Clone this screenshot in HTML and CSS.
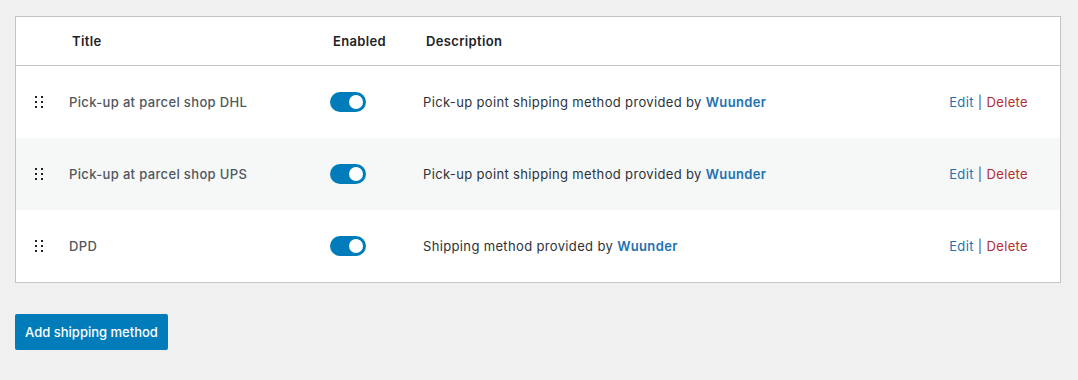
FILE: index.html
```html
<!DOCTYPE html>
<html>
<head>
<meta charset="utf-8">
<link rel="stylesheet" href="styles.css">
</head>
<body>
<div class="page">
  <div class="methods">
    <div class="row head">
      <div class="cell"></div>
      <div class="cell h">Title</div>
      <div class="cell h">Enabled</div>
      <div class="cell h">Description</div>
      <div class="cell"></div>
    </div>
    <div class="row">
      <div class="cell"><span class="drag"><i></i><i></i><i></i><i></i><i></i><i></i></span></div>
      <div class="cell title">Pick-up at parcel shop DHL</div>
      <div class="cell"><span class="toggle"><span class="knob"></span></span></div>
      <div class="cell desc">Pick-up point shipping method provided by <a>Wuunder</a></div>
      <div class="cell actions"><a class="edit">Edit</a> <span class="sep">|</span> <a class="del">Delete</a></div>
    </div>
    <div class="row alt">
      <div class="cell"><span class="drag"><i></i><i></i><i></i><i></i><i></i><i></i></span></div>
      <div class="cell title">Pick-up at parcel shop UPS</div>
      <div class="cell"><span class="toggle"><span class="knob"></span></span></div>
      <div class="cell desc">Pick-up point shipping method provided by <a>Wuunder</a></div>
      <div class="cell actions"><a class="edit">Edit</a> <span class="sep">|</span> <a class="del">Delete</a></div>
    </div>
    <div class="row">
      <div class="cell"><span class="drag"><i></i><i></i><i></i><i></i><i></i><i></i></span></div>
      <div class="cell title">DPD</div>
      <div class="cell"><span class="toggle"><span class="knob"></span></span></div>
      <div class="cell desc">Shipping method provided by <a>Wuunder</a></div>
      <div class="cell actions"><a class="edit">Edit</a> <span class="sep">|</span> <a class="del">Delete</a></div>
    </div>
  </div>
  <button class="add">Add shipping method</button>
</div>
</body>
</html>
```

FILE: styles.css
```css
html, body {
  margin: 0;
  padding: 0;
  background: #f0f0f1;
}
body {
  font-family: Inter, "Noto Sans", sans-serif;
  font-size: 13px;
  color: #1d2327;
}
.page {
  padding: 16px 18px 0 15px;
}
.methods {
  background: #fff;
  border: 1px solid #c3c4c7;
  width: 1044px;
  letter-spacing: 0.35px;
}
.row {
  display: grid;
  grid-template-columns: 53px 261px 93px 1fr 183px;
  align-items: center;
  height: 72px;
}
.row.alt {
  background: #f6f7f7;
}
.row.head {
  height: 48px;
  border-bottom: 1px solid #c3c4c7;
}
.cell.h {
  font-weight: 600;
  color: #1d2327;
  padding-left: 3px;
}
.drag {
  display: grid;
  grid-template-columns: 2px 2px;
  column-gap: 4px;
  row-gap: 3px;
  margin-left: 19px;
  width: 8px;
}
.drag i {
  display: block;
  width: 2px;
  height: 2px;
  background: #1d2327;
}
.title {
  color: #50575e;
  font-weight: 500;
}
.toggle {
  display: flex;
  align-items: center;
  justify-content: flex-end;
  box-sizing: border-box;
  width: 36px;
  height: 20px;
  border-radius: 10px;
  background: #007cba;
  padding: 3px;
}
.knob {
  display: block;
  width: 14px;
  height: 14px;
  border-radius: 50%;
  background: #fff;
}
.desc {
  color: #2c3338;
}
.desc a {
  color: #2271b1;
  font-weight: 600;
}
.actions {
  text-align: right;
  padding-right: 32px;
}
.edit { color: #2271b1; }
.sep { color: #50575e; }
.del { color: #b32d2e; }
.add {
  margin-top: 31px;
  height: 36px;
  width: 153px;
  border: 0;
  border-radius: 2px;
  background: #007cba;
  color: #fff;
  font-family: Inter, "Noto Sans", sans-serif;
  font-size: 13px;
  font-weight: 500;
  padding: 0;
}
```
